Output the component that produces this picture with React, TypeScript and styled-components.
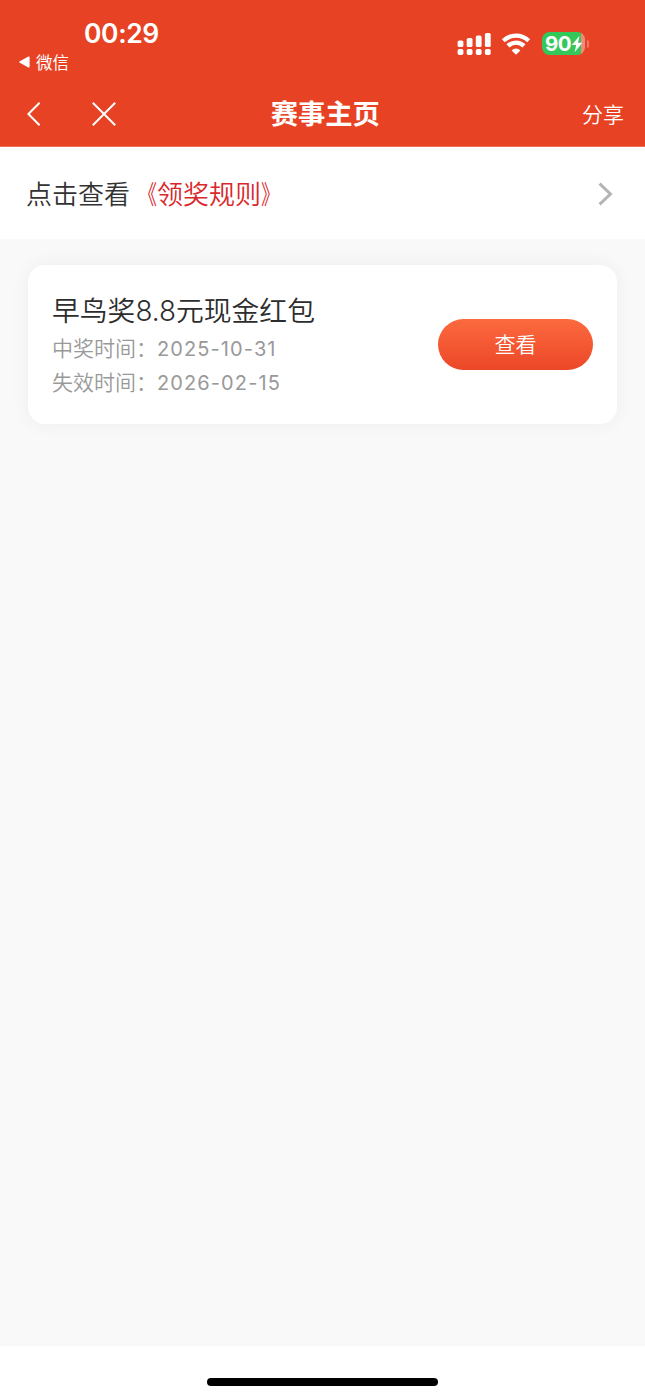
import React from 'react';
import styled, { createGlobalStyle } from 'styled-components';

interface Prize{
    id: number;
    name: string;
    winDate: string;
    expireDate: string;
}

const prizes: Prize[] = [
    { id: 1, name: '早鸟奖8.8元现金红包', winDate: '2025-10-31', expireDate: '2026-02-15' },
];

const signalBars = [6.5, 9, 11.5, 14];

const StatusIcons:React.FC = () => {
    return (
        <IconGroup>
            <svg width="34" height="24" viewBox="0 0 34 24" fill="#fff">
                {signalBars.map((h, i) => (
                    <g key={h}>
                        <rect x={0.6 + i * 9.1} y={15 - h} width="5.8" height={h} rx="1.6" />
                        <rect x={0.6 + i * 9.1} y="17" width="5.8" height="6" rx="1.8" />
                    </g>
                ))}
            </svg>
            <WifiIcon width="30" height="22" viewBox="0 0 30 22" fill="none" stroke="#fff" strokeWidth="4.3">
                <path d="M2.3 7.8 A18.2 18.2 0 0 1 27.7 7.8" />
                <path d="M7 12.9 A11.4 11.4 0 0 1 23 12.9" />
                <path d="M15 21.8 L10.6 17.4 A6.2 6.2 0 0 1 19.4 17.4 Z" fill="#fff" stroke="none" />
            </WifiIcon>
            <Battery>
                <BatteryLevel>90</BatteryLevel>
                <Bolt width="12" height="18" viewBox="0 0 12 18" fill="#fff">
                    <path d="M8.6 0.8 L0.8 10 H5.2 L3.6 17.2 L11.4 7.8 H7 Z" />
                </Bolt>
            </Battery>
            <BatteryTip />
        </IconGroup>
    );
};

const App:React.FC = () => {
    return (
        <Page>
            <GlobalStyle />
            <Header>
                <StatusBar>
                    <StatusLeft>
                        <Time>00:29</Time>
                        <BackApp>
                            <svg width="11" height="12" viewBox="0 0 11 12" fill="#fff">
                                <path d="M0.8 5.2 L9.4 0.6 Q10.6 0.2 10.6 1.4 V10.6 Q10.6 11.8 9.4 11.4 L0.8 6.8 Q-0.4 6 0.8 5.2 Z" />
                            </svg>
                            微信
                        </BackApp>
                    </StatusLeft>
                    <StatusIcons />
                </StatusBar>
                <NavBar>
                    <NavSide>
                        <NavButton $width={14}>
                            <svg width="14" height="24" viewBox="0 0 14 24" fill="none" stroke="#fff" strokeWidth="2">
                                <path d="M12.6 0.8 L1.4 12 L12.6 23.2" />
                            </svg>
                        </NavButton>
                        <NavButton $width={24}>
                            <svg width="24" height="24" viewBox="0 0 24 24" fill="none" stroke="#fff" strokeWidth="2">
                                <path d="M0.8 0.8 L23.2 23.2 M23.2 0.8 L0.8 23.2" />
                            </svg>
                        </NavButton>
                    </NavSide>
                    <NavTitle>赛事主页</NavTitle>
                    <Share>分享</Share>
                </NavBar>
            </Header>
            <RuleRow>
                <RuleText>
                    点击查看
                    <RuleLink>
                        <Bracket $side="right">《</Bracket>领奖规则<Bracket $side="left">》</Bracket>
                    </RuleLink>
                </RuleText>
                <RuleArrow width="15" height="24" viewBox="0 0 15 24" fill="none" stroke="#b4b4b4" strokeWidth="3">
                    <path d="M1.6 1.6 L12.4 12 L1.6 22.4" />
                </RuleArrow>
            </RuleRow>
            <Content>
                {prizes.map((prize) => (
                    <Card key={prize.id}>
                        <PrizeInfo>
                            <PrizeName>{prize.name}</PrizeName>
                            <PrizeDate>中奖时间：<DateValue>{prize.winDate}</DateValue></PrizeDate>
                            <PrizeDate>失效时间：<DateValue>{prize.expireDate}</DateValue></PrizeDate>
                        </PrizeInfo>
                        <ViewButton>查看</ViewButton>
                    </Card>
                ))}
            </Content>
            <Footer>
                <HomeBar />
            </Footer>
        </Page>
    );
};

export default App;

const GlobalStyle = createGlobalStyle`
* {
    box-sizing: border-box;
}
body {
    margin: 0;
    background: #fff;
    font-family: Inter, 'Noto Sans CJK SC', sans-serif;
}
button {
    padding: 0;
    border: none;
    background: none;
    font-family: inherit;
    cursor: pointer;
}
svg {
    display: block;
}
`

const Page = styled.div`
display: flex;
flex-direction: column;
height: 1398px;
`

const Header = styled.header`
height: 147px;
background: #e84224;
border-bottom: 1px solid #ec7058;
color: #fff;
`

const StatusBar = styled.div`
display: flex;
justify-content: space-between;
height: 80px;
padding: 16px 56px 0 19px;
`

const StatusLeft = styled.div`
display: flex;
flex-direction: column;
`

const Time = styled.div`
padding: 1px 0 0 65px;
font-size: 26.5px;
font-weight: 600;
line-height: 33px;
letter-spacing: -0.4px;
`

const BackApp = styled.div`
display: flex;
align-items: center;
gap: 6px;
height: 24px;
font-size: 16.5px;
font-weight: 400;
`

const IconGroup = styled.div`
display: flex;
align-items: center;
height: 55px;
`

const WifiIcon = styled.svg`
margin-left: 10px;
`

const Battery = styled.div`
display: flex;
align-items: center;
width: 43px;
height: 23px;
margin-left: 11px;
padding-left: 3px;
border-radius: 7.5px;
background: linear-gradient(90deg, #34c759 39px, #f08a7a 39px);
`

const BatteryLevel = styled.span`
font-size: 20.5px;
font-weight: 700;
line-height: 23px;
letter-spacing: -0.5px;
`

const Bolt = styled.svg`
margin-left: -0.5px;
`

const BatteryTip = styled.div`
width: 2.5px;
height: 8px;
margin-left: 1.5px;
border-radius: 0 3px 3px 0;
background: #ee7762;
`

const NavBar = styled.nav`
display: grid;
grid-template-columns: 1fr auto 1fr;
align-items: center;
height: 67px;
padding: 0 21px 0 26.5px;
`

const NavSide = styled.div`
display: flex;
gap: 51.5px;
`

const NavButton = styled.button<{ $width: number }>`
width: ${(props) => props.$width}px;
height: 24px;
`

const NavTitle = styled.h1`
margin: 2px 0 0;
font-size: 27.3px;
font-weight: 700;
line-height: 40px;
`

const Share = styled.button`
justify-self: end;
padding-bottom: 2px;
color: #fff;
font-size: 21px;
font-weight: 350;
`

const RuleRow = styled.div`
display: flex;
align-items: center;
justify-content: space-between;
height: 92px;
padding: 0 32px 0 26px;
background: #fff;
color: #333;
font-size: 26px;
font-weight: 350;
`

const RuleText = styled.div`
padding-bottom: 2px;
`

const RuleLink = styled.span`
margin-left: 1px;
color: #d9282c;
`

const Bracket = styled.span<{ $side: string }>`
display: inline-block;
transform: scaleX(0.72);
transform-origin: ${(props) => props.$side} center;
`

const RuleArrow = styled.svg`
margin-top: 2px;
`

const Content = styled.main`
flex: 1;
padding: 26px 28px;
background: #f9f9f9;
`

const Card = styled.section`
display: flex;
align-items: center;
justify-content: space-between;
height: 159px;
padding: 0 24px;
border-radius: 17px;
background: #fff;
box-shadow: 0 0 20px rgba(0, 0, 0, 0.05);
`

const PrizeInfo = styled.div`
padding-top: 1px;
`

const PrizeName = styled.div`
color: #2d2d2d;
font-size: 27.8px;
font-weight: 350;
line-height: 42px;
`

const PrizeDate = styled.div`
color: #999;
font-size: 21px;
font-weight: 350;
line-height: 33px;
`

const DateValue = styled.span`
font-size: 20px;
font-weight: 400;
letter-spacing: 1.1px;
`

const ViewButton = styled.button`
width: 155px;
height: 51px;
padding-bottom: 3px;
border-radius: 26px;
background: linear-gradient(180deg, #fc6a3f, #ec4728);
color: #fff;
font-size: 21px;
font-weight: 350;
`

const Footer = styled.footer`
display: flex;
justify-content: center;
height: 52px;
padding-top: 32px;
background: #fff;
`

const HomeBar = styled.div`
width: 231px;
height: 8px;
border-radius: 4px;
background: #000;
`
